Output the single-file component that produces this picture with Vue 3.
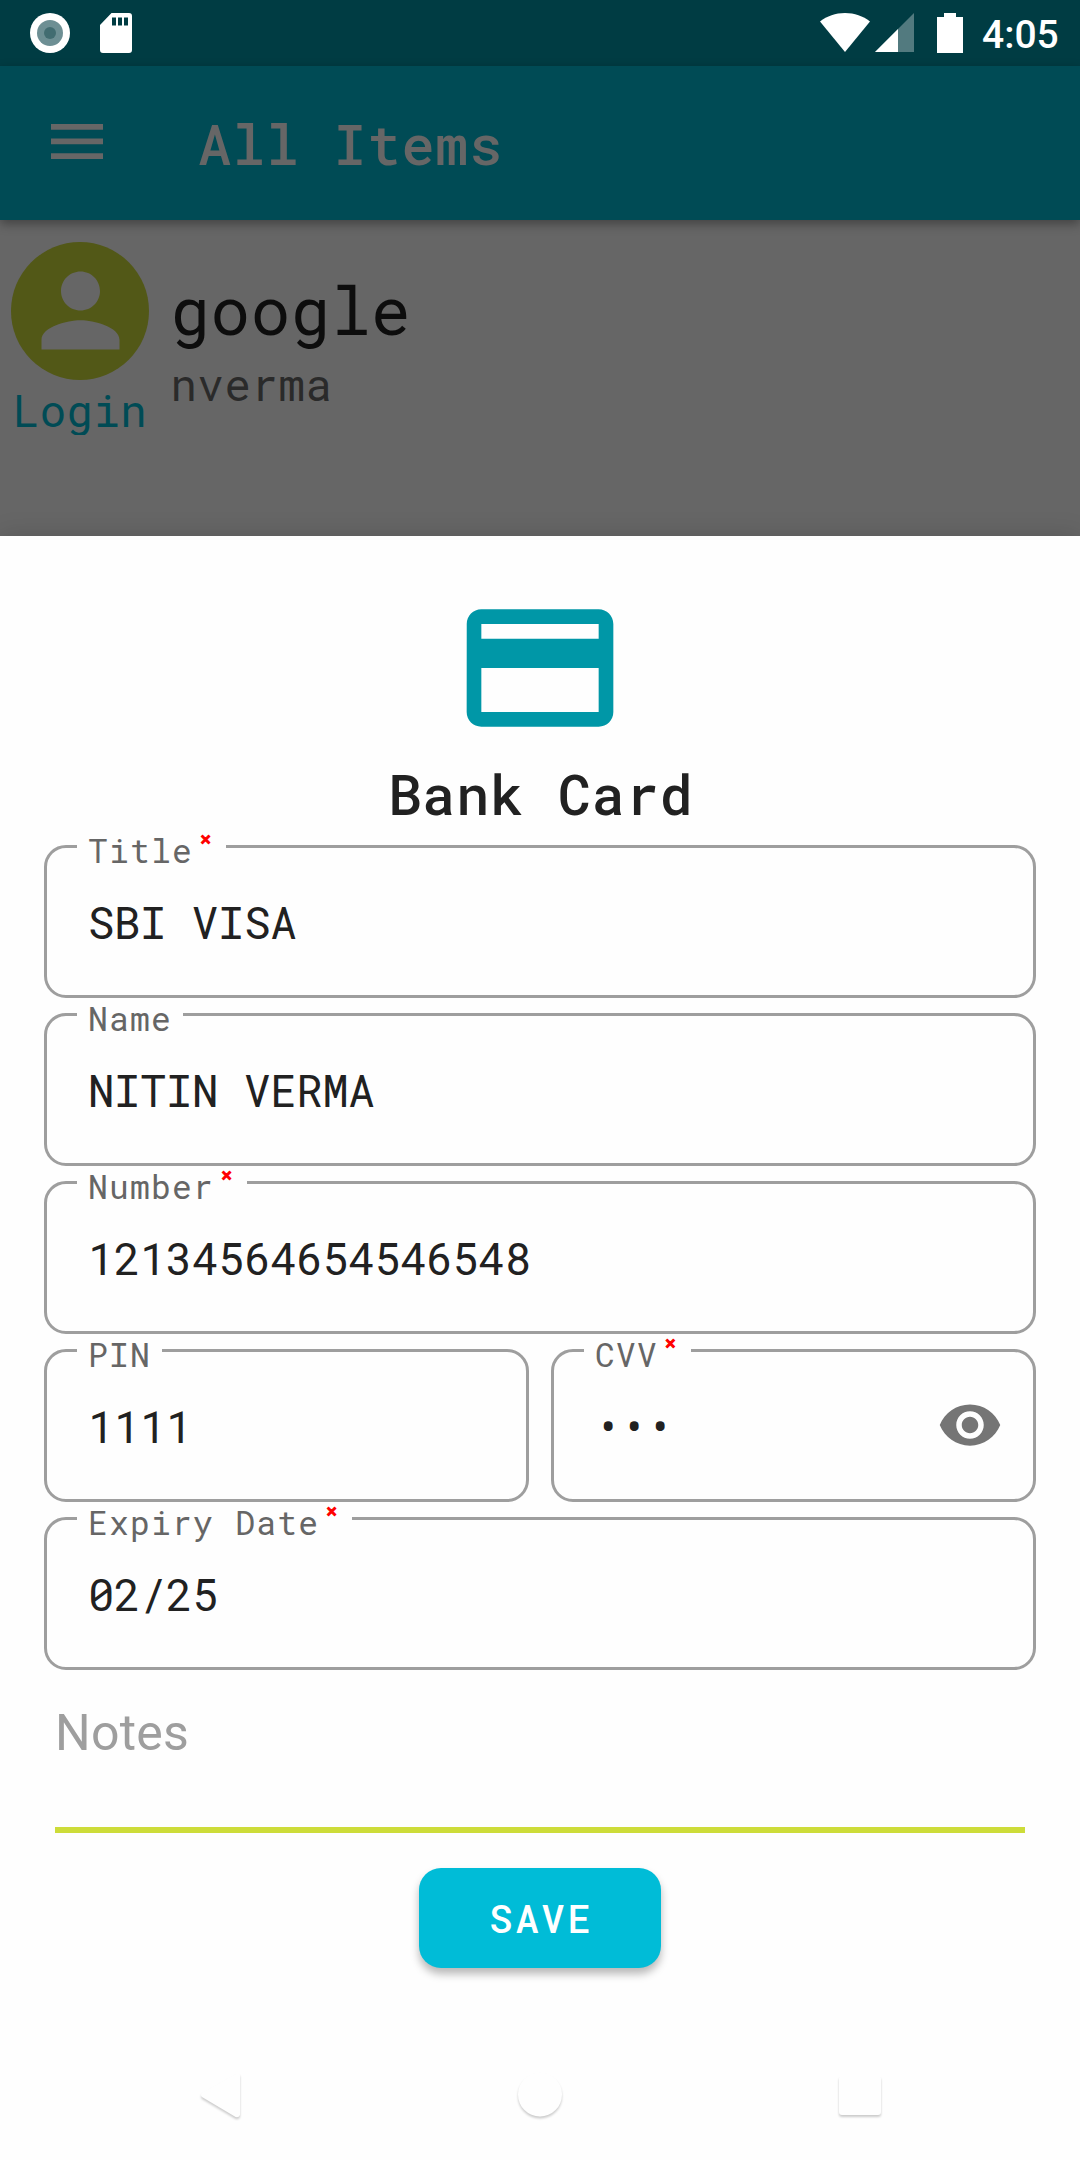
<script setup>
const rows = [
  [{ label: 'Title', required: true, value: 'SBI VISA' }],
  [{ label: 'Name', value: 'NITIN VERMA' }],
  [{ label: 'Number', required: true, value: '12134564654546548' }],
  [
    { label: 'PIN', value: '1111' },
    { label: 'CVV', required: true, value: '•••', secret: true },
  ],
  [{ label: 'Expiry Date', required: true, value: '02/25' }],
]
</script>

<template>
  <div class="screen">
    <header class="status">
      <svg class="rec" viewBox="0 0 40 40"><circle cx="20" cy="20" r="20" fill="#fff" /><circle cx="20" cy="20" r="13" fill="#6d8f94" /><circle cx="20" cy="20" r="6" fill="#416c71" /></svg>
      <svg class="sd" viewBox="0 0 32 40"><path fill="#fff" fill-rule="evenodd" d="M11.500 0H29a3 3 0 0 1 3 3V37a3 3 0 0 1-3 3H3a3 3 0 0 1-3-3V12ZM12 4.500V12.500H16V4.500ZM18 4.500V12.500H22V4.500ZM24 4.500V12.500H28V4.500Z" /></svg>
      <span class="grow"></span>
      <svg class="wifi" viewBox="0 0 50 39"><path fill="#fff" d="M25 39 0 8.500C7 3 15.500 0 25 0s18 3 25 8.500Z" /></svg>
      <svg class="signal" viewBox="0 0 39 39"><path fill="#fff" fill-opacity=".32" d="M39 0V39H0Z" /><path fill="#fff" d="M23 16V39H0Z" /></svg>
      <svg class="battery" viewBox="0 0 26 40"><path fill="#fff" d="M7 0H19V4H26V40H0V4H7Z" /></svg>
      <span class="time">4:05</span>
    </header>
    <nav class="appbar">
      <svg class="menu" viewBox="0 0 52 35"><path fill="#666" d="M0 0H52V5.700H0ZM0 14.600H52V20.300H0ZM0 29.200H52V35H0Z" /></svg>
      <h1 class="mono">All Items</h1>
    </nav>
    <section class="backdrop">
      <div class="account">
        <div class="avatar">
          <svg viewBox="0 0 24 24"><path fill="#666" d="M12 12c2.210 0 4-1.790 4-4s-1.790-4-4-4-4 1.790-4 4 1.790 4 4 4zm0 2c-2.670 0-8 1.340-8 4v2h16v-2c0-2.660-5.330-4-8-4z" /></svg>
        </div>
        <span class="kind mono">Login</span>
      </div>
      <div class="entry">
        <div class="site mono">google</div>
        <div class="user mono">nverma</div>
      </div>
    </section>
    <main class="sheet">
      <svg class="card" viewBox="0 0 24 24"><path fill="#0097a7" d="M20 4H4c-1.110 0-1.990.89-1.990 2L2 18c0 1.110.89 2 2 2h16c1.110 0 2-.89 2-2V6c0-1.110-.89-2-2-2zm0 14H4v-6h16v6zm0-10H4V6h16v2z" /></svg>
      <h2 class="mono">Bank Card</h2>
      <div class="form">
        <div v-for="(row, i) in rows" :key="i" class="row">
          <div v-for="f in row" :key="f.label" class="field">
            <label class="mono">{{ f.label }}<span v-if="f.required" class="req"><b>×</b></span></label>
            <span class="value mono">{{ f.value }}</span>
            <svg v-if="f.secret" class="eye" viewBox="0 0 24 24"><path fill="#757575" d="M12 4.500C7 4.500 2.730 7.610 1 12c1.730 4.390 6 7.500 11 7.500s9.270-3.110 11-7.500c-1.730-4.390-6-7.500-11-7.500zM12 17c-2.760 0-5-2.240-5-5s2.240-5 5-5 5 2.240 5 5-2.240 5-5 5zm0-8c-1.660 0-3 1.340-3 3s1.340 3 3 3 3-1.340 3-3-1.340-3-3-3z" /></svg>
          </div>
        </div>
      </div>
      <div class="notes">Notes</div>
      <button class="save mono">SAVE</button>
      <footer class="navbar">
        <svg viewBox="0 0 60 60"><path d="M50 9V49Q48 53 44 50L12 31Q10 29 12 27L46 8Q49 6 50 9Z" /></svg>
        <svg viewBox="0 0 60 60"><circle cx="30" cy="28.500" r="22" /></svg>
        <svg viewBox="0 0 60 60"><rect x="9" y="10" width="42" height="39" rx="3" /></svg>
      </footer>
    </main>
  </div>
</template>

<style>
body { margin: 0; background: #fefefe; }
</style>

<style scoped>
.screen { width: 1080px; height: 2160px; overflow: hidden; display: flex; flex-direction: column; background: #666; font-family: Roboto, sans-serif; }
.mono { font-family: "Roboto Mono", "DejaVu Sans Mono", monospace; font-weight: 400; white-space: pre; }
svg { display: block; flex: none; }
h1, h2 { margin: 0; }

.status { height: 66px; flex: none; box-sizing: border-box; padding: 13px 23px 0 30px; display: flex; align-items: flex-start; background: #003c43; }
.rec { width: 40px; height: 40px; }
.sd { width: 32px; height: 40px; margin-left: 30px; }
.grow { flex: 1; }
.wifi { width: 50px; height: 39px; }
.signal { width: 39px; height: 39px; margin-left: 4.500px; }
.battery { width: 26px; height: 40px; margin-left: 23px; }
.time { width: 75px; margin-left: 19.500px; color: #fff; font-size: 39px; font-weight: 500; line-height: 44px; white-space: nowrap; }

.appbar { position: relative; z-index: 1; height: 154px; flex: none; display: flex; align-items: center; background: #004b55; box-shadow: 0 4px 10px rgba(0, 0, 0, .35); }
.menu { width: 52px; height: 35px; margin: -4px 0 0 51px; }
h1.mono { margin-left: 95px; color: #666; font-size: 55px; font-weight: 500; letter-spacing: .900px; line-height: 60px; padding-top: 1px; }

.backdrop { height: 316px; flex: none; display: flex; }
.account { width: 138px; margin: 22px 0 0 11px; }
.avatar { height: 138px; border-radius: 50%; background: #525817; display: flex; justify-content: center; }
.avatar svg { width: 117px; height: 117px; margin-top: 10.300px; }
.kind { display: block; height: 50px; margin-top: 5px; overflow: hidden; text-align: center; color: #004b55; font-size: 44px; letter-spacing: .500px; line-height: 50px; }
.entry { margin: 59px 0 0 21.500px; }
.site { color: #0d0d0d; font-size: 66px; letter-spacing: .500px; line-height: 62px; }
.user { color: #2a2a2a; font-size: 44px; letter-spacing: .600px; line-height: 50px; padding-top: 17.500px; }

.sheet { position: relative; flex: 1; display: flex; flex-direction: column; align-items: center; background: #fefefe; box-shadow: 0 0 24px rgba(0, 0, 0, .15); }
.card { width: 176px; height: 176px; margin-top: 44px; }
h2.mono { margin-top: 6px; padding-left: 2px; color: #212121; font-size: 55px; font-weight: 500; letter-spacing: .900px; line-height: 64px; }
.form { width: 992px; margin-top: 19px; display: flex; flex-direction: column; gap: 15px; }
.row { display: flex; gap: 22px; }
.field { position: relative; flex: 1; height: 153px; box-sizing: border-box; border: 3px solid #9e9e9e; border-radius: 22px; padding: 1px 30px 0 41px; display: flex; align-items: center; }
label.mono { position: absolute; left: 30px; top: -14px; padding: 0 11px; background: #fefefe; color: #666; font-size: 33px; letter-spacing: 1.220px; line-height: 33px; }
.req { display: inline-block; width: 22px; height: 10px; color: #f00; }
.req b { position: absolute; margin-left: 6.500px; top: -5px; font: 700 14px/20px "DejaVu Sans", sans-serif; letter-spacing: 0; -webkit-text-stroke: 1.200px #f00; }
.value { flex: 1; color: #212121; font-size: 44px; letter-spacing: -.380px; line-height: 50px; }
.eye { width: 66px; height: 66px; margin-top: -3px; }

.notes { width: 970px; height: 163px; box-sizing: border-box; border-bottom: 6px solid #cddc39; color: #9e9e9e; font-size: 50px; letter-spacing: .250px; line-height: 60px; padding-top: 33px; }
.save { width: 242px; height: 100px; margin-top: 35px; padding: 0 0 0 3px; border: 0; border-radius: 22px; background: #00bcd7; color: #fff; font-size: 38.500px; font-weight: 500; letter-spacing: 3px; box-shadow: 0 6px 8px rgba(0, 0, 0, .28); }
.navbar { width: 1080px; box-sizing: border-box; margin-top: 98px; padding: 0 190px; display: flex; justify-content: space-between; }
.navbar svg { width: 60px; height: 60px; fill: #fefefe; filter: drop-shadow(0 2px .9px rgba(0, 0, 0, .2)); }
</style>
